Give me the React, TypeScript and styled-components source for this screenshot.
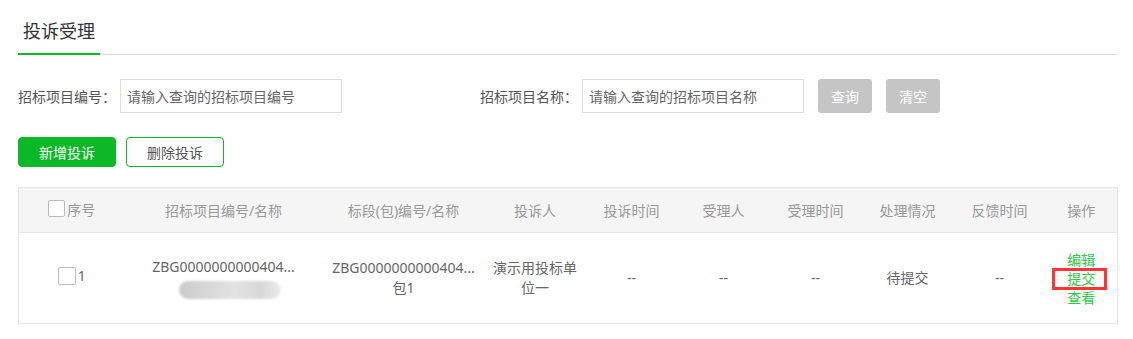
import React from 'react'
import styled, { createGlobalStyle } from 'styled-components'

const Global = createGlobalStyle`
  body {
    margin: 0;
    background: #fff;
    font-family: 'Noto Sans', 'Noto Sans CJK SC', sans-serif;
    font-size: 14px;
    color: #555;
  }
`

const Page = styled.div`
  padding: 0 16px 0 18px;
`

const TabBar = styled.div`
  display: flex;
  height: 54px;
  border-bottom: 1px solid #dddddd;
`

const Tab = styled.div`
  width: 82px;
  padding: 12px 0 3px;
  line-height: 38px;
  text-align: center;
  font-size: 18px;
  color: #333;
  border-bottom: 2px solid #0bb827;
  margin-bottom: -1px;
`

const FilterRow = styled.div`
  display: flex;
  align-items: center;
  margin-top: 24px;
  height: 34px;
`

const Label = styled.label<{ $gap?: number }>`
  width: 102px;
  margin-left: ${p => p.$gap || 0}px;
  color: #555;
  white-space: nowrap;
`

const Input = styled.input`
  box-sizing: border-box;
  width: 222px;
  height: 34px;
  border: 1px solid #dddddd;
  padding: 0 6px;
  font-family: inherit;
  font-size: 14px;
  outline: none;
  &::placeholder {
    color: #666;
  }
`

const GrayBtn = styled.button`
  width: 54px;
  height: 34px;
  margin-left: 14px;
  border: none;
  border-radius: 3px;
  background: #c5c5c5;
  color: #fff;
  font-family: inherit;
  font-size: 14px;
`

const ActionRow = styled.div`
  display: flex;
  gap: 10px;
  margin-top: 24px;
`

const ActionBtn = styled.button<{ $primary?: boolean }>`
  box-sizing: border-box;
  width: 98px;
  height: 30px;
  border-radius: 4px;
  border: 1px solid #0bb827;
  background: ${p => (p.$primary ? '#0bb827' : '#fff')};
  color: ${p => (p.$primary ? '#fff' : '#555')};
  font-family: inherit;
  font-size: 14px;
`

const Table = styled.table`
  margin-top: 20px;
  width: 1099px;
  table-layout: fixed;
  border-collapse: collapse;
  border: 1px solid #e6e6e6;
`

const Th = styled.th`
  height: 44px;
  padding: 0 6px;
  background: #f5f5f5;
  color: #999;
  font-weight: normal;
  text-align: center;
  border-bottom: 1px solid #e6e6e6;
  white-space: nowrap;
`

const Td = styled.td`
  height: 90px;
  padding: 0 6px;
  color: #666;
  text-align: center;
  line-height: 20px;
  border-bottom: 1px solid #e6e6e6;
`

const CheckCell = styled.span`
  display: inline-flex;
  align-items: center;
  gap: 2px;
`

const Box = styled.span<{ $size: number }>`
  box-sizing: border-box;
  width: ${p => p.$size}px;
  height: ${p => p.$size}px;
  border: 1px solid #bbb;
  border-radius: 2px;
  background: #fff;
`

const Ellipsis = styled.div`
  white-space: nowrap;
`

const Blur = styled.div`
  width: 102px;
  height: 18px;
  margin: 4px 0 0 48px;
  border-radius: 9px;
  background: linear-gradient(90deg, #cbcbcb 0%, #d6d6d6 25%, #e3e3e3 55%, #d8d8d8 80%, #ececec 100%);
  filter: blur(1px);
`

const Ops = styled.div`
  display: flex;
  flex-direction: column;
  align-items: center;
  line-height: 19px;
`

const OpLink = styled.a`
  color: #2cc84a;
  text-decoration: none;
  cursor: pointer;
`

const Marked = styled(OpLink)`
  position: relative;
  display: inline-block;
  &::after {
    content: '';
    position: absolute;
    left: -15px;
    right: -12px;
    top: -1px;
    bottom: -2px;
    border: 3px solid #ff3535;
  }
`

const widths = [106, 198, 162, 101, 92, 92, 92, 92, 92, 72]
const heads = ['招标项目编号/名称', '标段(包)编号/名称', '投诉人', '投诉时间', '受理人', '受理时间', '处理情况', '反馈时间', '操作']

export default function App() {
  return (
    <Page>
      <Global />
      <TabBar>
        <Tab>投诉受理</Tab>
      </TabBar>
      <FilterRow>
        <Label>招标项目编号：</Label>
        <Input placeholder="请输入查询的招标项目编号" />
        <Label $gap={138}>招标项目名称：</Label>
        <Input placeholder="请输入查询的招标项目名称" />
        <GrayBtn>查询</GrayBtn>
        <GrayBtn>清空</GrayBtn>
      </FilterRow>
      <ActionRow>
        <ActionBtn $primary>新增投诉</ActionBtn>
        <ActionBtn>删除投诉</ActionBtn>
      </ActionRow>
      <Table>
        <colgroup>
          {widths.map((w, i) => (
            <col key={i} style={{ width: w }} />
          ))}
        </colgroup>
        <thead>
          <tr>
            <Th>
              <CheckCell>
                <Box $size={17} />
                序号
              </CheckCell>
            </Th>
            {heads.map(h => (
              <Th key={h}>{h}</Th>
            ))}
          </tr>
        </thead>
        <tbody>
          <tr>
            <Td>
              <CheckCell>
                <Box $size={18} />1
              </CheckCell>
            </Td>
            <Td>
              <Ellipsis>ZBG0000000000404...</Ellipsis>
              <Blur />
            </Td>
            <Td>
              <Ellipsis>ZBG0000000000404...</Ellipsis>
              <div>包1</div>
            </Td>
            <Td>演示用投标单位一</Td>
            <Td>--</Td>
            <Td>--</Td>
            <Td>--</Td>
            <Td>待提交</Td>
            <Td>--</Td>
            <Td>
              <Ops>
                <OpLink>编辑</OpLink>
                <Marked>提交</Marked>
                <OpLink>查看</OpLink>
              </Ops>
            </Td>
          </tr>
        </tbody>
      </Table>
    </Page>
  )
}
